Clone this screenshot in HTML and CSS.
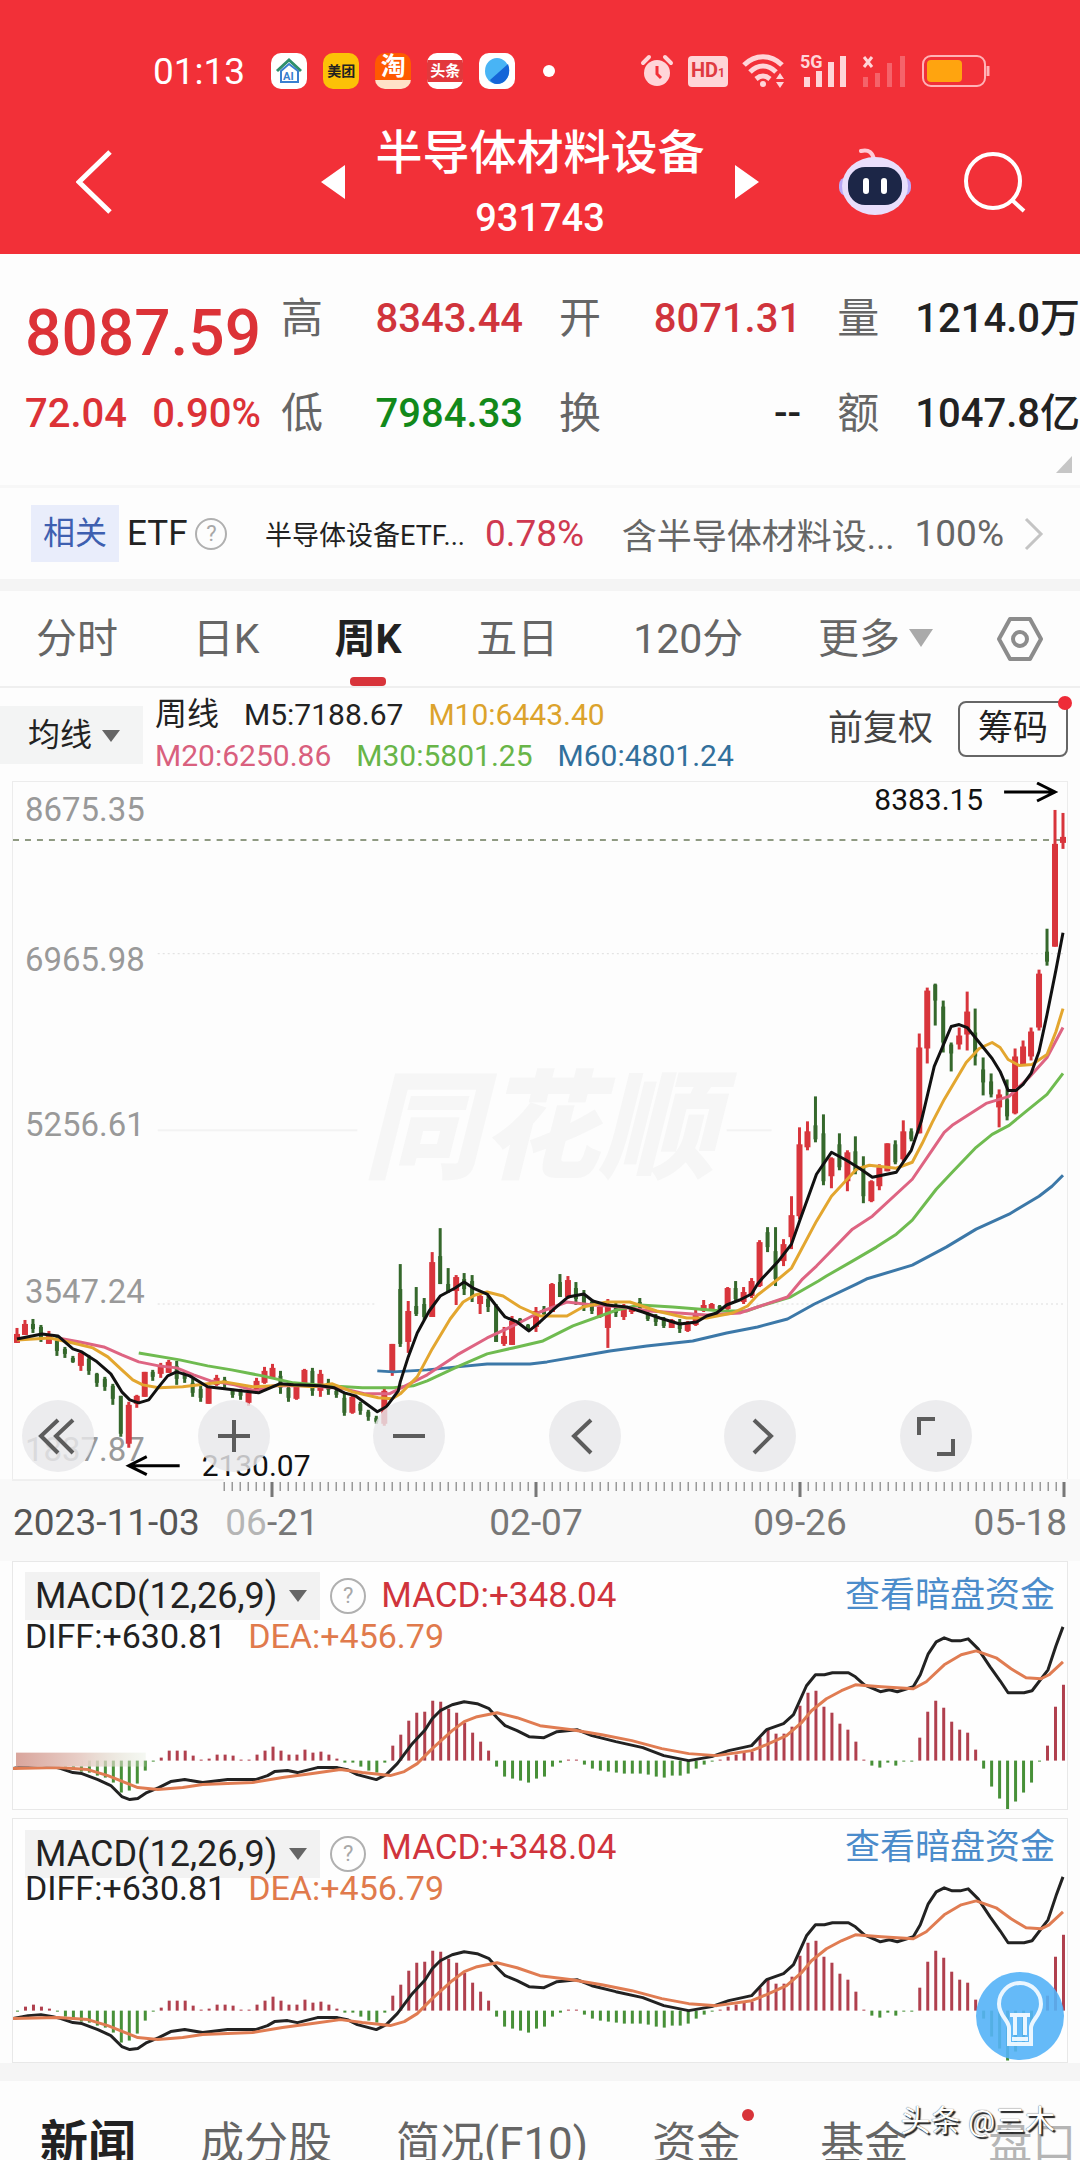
FILE: index.html
```html
<!DOCTYPE html>
<html lang="zh-CN">

<head>
  <meta charset="UTF-8">
  <meta name="viewport" content="width=device-width, initial-scale=1.0">
  <title>半导体材料设备 931743</title>
  <link rel="stylesheet" href="styles.css">
</head>

<body>
  <header class="top">
    <div class="status">
      <div class="status-left">
        <span class="clock">01:13</span>
        <span class="app app-home">
          <svg viewBox="0 0 36 36"><path d="M6 18 18 7l12 11" fill="none" stroke="#2f8f6b" stroke-width="3"/><path d="M10 18v11h17V18L18 11z" fill="none" stroke="#3a7fd0" stroke-width="2"/><text x="12" y="27" font-size="11" font-weight="700" fill="#3a7fd0">AI</text></svg>
        </span>
        <span class="app app-meituan">美团</span>
        <span class="app app-taobao">淘</span>
        <span class="app app-toutiao"><b>头条</b></span>
        <span class="app app-browser">
          <svg viewBox="0 0 36 36"><ellipse cx="18" cy="18" rx="12" ry="13" fill="#48b4f5"/><path d="M29 11c4 10-2 20-11 20-3 0-6-2-7-4z" fill="#1565d8"/></svg>
        </span>
        <span class="more-dot"></span>
      </div>
      <div class="status-right">
        <svg width="34" height="34" viewBox="0 0 34 34"><circle cx="17" cy="19" r="13" fill="#ffd5d8"/><path d="M3 9 9 3M31 9l-6-6" stroke="#ffd5d8" stroke-width="4" stroke-linecap="round"/><path d="M17 12v8l4 4" fill="none" stroke="#f23038" stroke-width="3"/></svg>
        <span class="hd">HD<small>1</small></span>
        <svg width="44" height="36" viewBox="0 0 44 36"><g fill="none" stroke="#ffd5d8" stroke-width="5"><path d="M2 12c11-11 27-11 38 0M8 19c8-8 18-8 26 0M14 26c5-4 9-4 14 0"/></g><circle cx="21" cy="31" r="3" fill="#ffd5d8"/><path d="M34 26l4-6 4 6zM34 29l4 6 4-6z" fill="#ffd5d8"/></svg>
        <svg width="48" height="36" viewBox="0 0 48 36"><text x="0" y="15" font-size="18" font-weight="700" fill="#ffd5d8">5G</text><g fill="#ffd5d8"><path d="M4 24h6v10H4zM16 18h6v16h-6zM28 9h6v25h-6zM40 3h6v31h-6z"/></g></svg>
        <svg width="46" height="36" viewBox="0 0 46 36"><path d="M2 4l8 10M10 4 2 14" stroke="#ffd5d8" stroke-width="3"/><g fill="#f5636a"><path d="M1 24h5v10H1zM13 20h5v14h-5zM25 10h5v24h-5zM38 3h5v31h-5z"/></g></svg>
        <svg width="68" height="32" viewBox="0 0 68 32"><rect x="1" y="1" width="62" height="30" rx="8" fill="none" stroke="#ffb3b7" stroke-width="2"/><rect x="5" y="5" width="35" height="22" rx="4" fill="#ffa40f"/><path d="M66 11v10" stroke="#ffb3b7" stroke-width="3"/></svg>
      </div>
    </div>

    <div class="titlebar">
      <div class="side">
        <button class="icon-btn" aria-label="返回">
          <svg width="36" height="64" viewBox="0 0 36 64"><path d="M34 2 3 32l31 30" fill="none" stroke="#fff" stroke-width="5"/></svg>
        </button>
      </div>
      <div class="switcher">
        <button class="icon-btn" aria-label="上一只"><svg width="24" height="34" viewBox="0 0 24 34"><path d="M24 0v34L0 17z" fill="#fff"/></svg></button>
        <div class="names">
          <h1>半导体材料设备</h1>
          <p>931743</p>
        </div>
        <button class="icon-btn" aria-label="下一只"><svg width="24" height="34" viewBox="0 0 24 34"><path d="M0 0v34l24-17z" fill="#fff"/></svg></button>
      </div>
      <div class="side side-right">
        <button class="icon-btn" aria-label="助手">
          <svg width="72" height="68" viewBox="0 0 72 68"><path d="M22 3c8-2 12 2 13 9" fill="none" stroke="#ffc9d6" stroke-width="4" stroke-linecap="round"/><rect x="0" y="29" width="72" height="19" rx="8" fill="#b9a8f5"/><ellipse cx="36" cy="38" rx="33" ry="29" fill="#e9defb"/><rect x="9" y="19" width="54" height="38" rx="17" fill="#1c2647"/><path d="M27 33v10M45 33v10" stroke="#fff" stroke-width="6" stroke-linecap="round"/></svg>
        </button>
        <button class="icon-btn" aria-label="搜索">
          <svg width="62" height="62" viewBox="0 0 62 62"><circle cx="29" cy="30" r="27" fill="none" stroke="#fff" stroke-width="4"/><path d="M48 49l12 11" stroke="#fff" stroke-width="4"/></svg>
        </button>
      </div>
    </div>
  </header>

  <section class="quote">
    <div class="price">
      <strong>8087.59</strong>
      <div class="change"><span>72.04</span><span>0.90%</span></div>
    </div>
    <dl class="stats">
      <dt>高</dt><dd class="red">8343.44</dd>
      <dt>开</dt><dd class="red">8071.31</dd>
      <dt>量</dt><dd>1214.0万</dd>
      <dt>低</dt><dd class="green">7984.33</dd>
      <dt>换</dt><dd>--</dd>
      <dt>额</dt><dd>1047.8亿</dd>
    </dl>
    <span class="corner"></span>
  </section>

  <section class="related">
    <div class="related-group tight">
      <span class="tag">相关</span>
      <span class="etf">ETF</span>
      <button class="help" aria-label="说明">?</button>
    </div>
    <a href="#" class="related-group fund"><span class="fund-name">半导体设备ETF...</span><span class="fund-rate">0.78%</span></a>
    <a href="#" class="related-group holding">
      <span>含半导体材料设...</span><span class="ratio">100%</span>
      <svg width="20" height="34" viewBox="0 0 20 34"><path d="M2 2l15 15L2 32" fill="none" stroke="#c4c4c4" stroke-width="3"/></svg>
    </a>
  </section>

  <nav class="periods">
    <button>分时</button>
    <button>日K</button>
    <button class="active">周K</button>
    <button>五日</button>
    <button>120分</button>
    <button class="more">更多<i class="caret"></i></button>
    <button aria-label="设置">
      <svg width="48" height="46" viewBox="0 0 48 46"><path d="M14 3h20l11 20-11 20H14L3 23z" fill="none" stroke="#8c8c8c" stroke-width="4" stroke-linejoin="round"/><circle cx="24" cy="23" r="7" fill="none" stroke="#8c8c8c" stroke-width="4"/></svg>
    </button>
  </nav>

  <section class="averages">
    <button class="ma-select">均线<i class="caret"></i></button>
    <div class="ma-values">
      <div><span class="cycle">周线</span><span>M5:7188.67</span><span class="m10">M10:6443.40</span></div>
      <div><span class="m20">M20:6250.86</span><span class="m30">M30:5801.25</span><span class="m60">M60:4801.24</span></div>
    </div>
    <div class="ma-actions">
      <button class="adjust">前复权</button>
      <button class="chips">筹码</button>
    </div>
  </section>

  <section class="kline">
    <svg id="kline" viewBox="0 0 1056 698"></svg>
    <div class="tools">
      <button aria-label="最早"><svg viewBox="0 0 72 72"><path d="M36 20 19 36l17 17M51 20 34 36l17 17"/></svg></button>
      <button aria-label="放大"><svg viewBox="0 0 72 72"><path d="M20 36h32M36 20v32"/></svg></button>
      <button aria-label="缩小"><svg viewBox="0 0 72 72"><path d="M20 36h32"/></svg></button>
      <button aria-label="左移"><svg viewBox="0 0 72 72"><path d="M42 20 25 36l17 17"/></svg></button>
      <button aria-label="右移"><svg viewBox="0 0 72 72"><path d="M30 20l17 16-17 17"/></svg></button>
      <button aria-label="全屏"><svg viewBox="0 0 72 72"><path d="M35 19H19v16M53 39v15H37"/></svg></button>
    </div>
  </section>
  <div class="axis">
    <svg id="axis" viewBox="0 0 1056 82"></svg>
  </div>

  <section class="macd">
    <svg class="macd-chart" viewBox="0 -199 1056 248"></svg>
    <div class="macd-head">
      <div class="macd-row">
        <button class="macd-select">MACD(12,26,9)<i class="caret"></i></button>
        <button class="help" aria-label="说明">?</button>
        <span class="red">MACD:+348.04</span>
        <a href="#">查看暗盘资金</a>
      </div>
      <div class="macd-row second"><span>DIFF:+630.81</span><span class="dea">DEA:+456.79</span></div>
    </div>
  </section>

  <section class="macd compact">
    <svg class="macd-chart" viewBox="0 -192 1056 243"></svg>
    <div class="macd-head">
      <div class="macd-row">
        <button class="macd-select">MACD(12,26,9)<i class="caret"></i></button>
        <button class="help" aria-label="说明">?</button>
        <span class="red">MACD:+348.04</span>
        <a href="#">查看暗盘资金</a>
      </div>
      <div class="macd-row second"><span>DIFF:+630.81</span><span class="dea">DEA:+456.79</span></div>
    </div>
    <button class="bulb" aria-label="提示">
      <svg viewBox="0 0 88 88"><path d="M33 56c0-8-10-12-10-24a21 21 0 0 1 42 0c0 12-10 16-10 24v16H33z" fill="none" stroke="#eaf6ff" stroke-width="4"/><path d="M34 43h20M39 43v20M49 43v20M36 67h16" stroke="#eaf6ff" stroke-width="4"/></svg>
    </button>
  </section>

  <nav class="news">
    <button class="active">新闻</button>
    <button>成分股</button>
    <button>简况(F10)</button>
    <button class="dot">资金</button>
    <button>基金</button>
    <button class="faded">盘口</button>
    <span class="credit">头条 @三木</span>
  </nav>

  <script src="script.js"></script>
</body>

</html>
```

FILE: styles.css
```css
* {
  box-sizing: border-box;
}

body {
  margin: 0;
  overflow-x: hidden;
  font-family: Roboto, "Noto Sans CJK SC", sans-serif;
  color: #222;
  background-color: #fdfdfd;
}

button {
  padding: 0;
  border: none;
  background: none;
  font: inherit;
  color: inherit;
  white-space: nowrap;
  cursor: pointer;
}

a {
  color: inherit;
  text-decoration: none;
}

svg {
  display: block;
}

h1,
p,
dl,
dd {
  margin: 0;
}

.red {
  color: #d0343c;
}

.green {
  color: #12891a;
}

.caret {
  display: inline-block;
  border: 9px solid transparent;
  border-top: 12px solid #666;
  border-bottom: none;
}

/* header */
.top {
  padding-top: 48px;
  background-color: #f23038;
  color: white;
}

.status {
  height: 46px;
  padding: 0 90px 0 153px;
  display: flex;
  justify-content: space-between;
  align-items: center;
}

.status-left,
.status-right {
  display: flex;
  align-items: center;
  gap: 16px;
}

.status-right {
  gap: 14px;
}

.clock {
  margin-right: 10px;
  font-size: 37px;
}

.app {
  width: 36px;
  height: 36px;
  border-radius: 10px;
  overflow: hidden;
  background-color: white;
  text-align: center;
  line-height: 36px;
}

.app-meituan {
  background-color: #fcc107;
  color: #222;
  font-size: 14px;
  font-weight: bold;
}

.app-taobao {
  background-image: linear-gradient(#ff5a00 75%, #ffe2c8 75%);
  font-size: 25px;
  line-height: 28px;
  font-weight: bold;
}

.app-toutiao b {
  display: block;
  margin-top: 7px;
  background-color: #e2383c;
  font-size: 15px;
  line-height: 22px;
}

.more-dot {
  width: 12px;
  height: 12px;
  margin-left: 12px;
  border-radius: 50%;
  background-color: white;
}

.hd {
  padding: 0 3px;
  border-radius: 4px;
  background-color: #ffd5d8;
  color: #e03a41;
  font-size: 20px;
  line-height: 28px;
  font-weight: bold;
}

.hd small {
  font-size: 12px;
}

.titlebar {
  padding: 31px 0 16px;
  display: grid;
  grid-template-columns: 1fr 438px 1fr;
  align-items: center;
}

.side {
  display: flex;
  padding-left: 76px;
}

.side-right {
  justify-content: flex-end;
  align-items: center;
  gap: 53px;
  padding: 0 54px 0 0;
}

.switcher {
  display: flex;
  justify-content: space-between;
  align-items: center;
}

.names {
  text-align: center;
}

.names h1 {
  font-size: 47px;
  line-height: 56px;
  font-weight: 500;
}

.names p {
  margin-top: 17px;
  font-size: 38px;
  line-height: 40px;
  font-weight: 500;
}

/* quote */
.quote {
  position: relative;
  display: flex;
  gap: 20px;
  padding: 41px 0 47px 25px;
  font-size: 40px;
  line-height: 48px;
  font-weight: 500;
}

.price {
  padding-top: 7px;
  color: #dc3237;
}

.price strong {
  display: block;
  font-size: 64px;
  line-height: 64px;
  font-weight: 500;
}

.change {
  margin-top: 24px;
  display: flex;
  justify-content: space-between;
}

.stats {
  flex: 1;
  display: grid;
  grid-template-columns: 42px 1fr 42px 1fr 42px auto;
  gap: 46px 36px;
}

.stats dt {
  color: #666;
  font-size: 42px;
  font-weight: 400;
}

.stats dd {
  text-align: right;
}

.corner {
  position: absolute;
  right: 8px;
  bottom: 12px;
  border-left: 16px solid transparent;
  border-bottom: 17px solid #c6c6c6;
}

/* related ETF */
.related {
  height: 94px;
  padding: 0 36px 0 31px;
  display: flex;
  justify-content: space-between;
  align-items: center;
  border-top: 3px solid #f7f7f7;
}

.related-group {
  display: flex;
  align-items: center;
  gap: 20px;
}

.tight {
  gap: 8px;
}

.tag {
  padding: 0 12px;
  background-color: #e9edfb;
  color: #3e5fb0;
  font-size: 32px;
  line-height: 57px;
}

.etf {
  font-size: 35px;
}

.help {
  width: 32px;
  height: 32px;
  border: 2px solid #b0b0b0;
  border-radius: 50%;
  color: #a8a8a8;
  font-size: 22px;
  line-height: 26px;
}

.fund-name {
  font-size: 27px;
}

.fund-rate {
  color: #cf3950;
  font-size: 37px;
}

.holding {
  color: #666;
  font-size: 35px;
}

.ratio {
  font-size: 37px;
}

/* period tabs */
.periods {
  height: 109px;
  padding: 0 36px;
  display: flex;
  justify-content: space-between;
  align-items: center;
  border-top: 12px solid #f4f4f4;
  border-bottom: 2px solid #efefef;
  color: #666;
  font-size: 41px;
}

.periods button {
  position: relative;
  line-height: 94px;
}

.periods .active {
  color: #222;
  font-weight: bold;
}

.periods .active::after {
  content: "";
  position: absolute;
  left: 16px;
  bottom: 0;
  width: 36px;
  height: 9px;
  border-radius: 4px;
  background-color: #d8343a;
}

.periods .more {
  margin-right: -12px;
}

.more .caret {
  margin-left: 9px;
  vertical-align: 6px;
  border-width: 18px 12px 0;
  border-top-color: #aaa;
}

/* moving averages */
.averages {
  height: 93px;
  padding-right: 12px;
  display: flex;
  align-items: center;
}

.ma-select {
  padding: 0 23px 0 28px;
  background-color: #f3f4f4;
  font-size: 32px;
  line-height: 58px;
}

.ma-select .caret {
  margin-left: 10px;
  vertical-align: 4px;
}

.ma-values {
  flex: 1;
  padding-left: 12px;
  font-size: 30px;
}

.ma-values div {
  display: flex;
  gap: 25px;
  line-height: 41px;
}

.cycle {
  font-size: 32px;
}

.m10 {
  color: #dca32c;
}

.m20 {
  color: #d9607e;
}

.m30 {
  color: #68b548;
}

.m60 {
  color: #32709c;
}

.ma-actions {
  display: flex;
  align-items: center;
  gap: 25px;
  margin-bottom: 12px;
  font-size: 35px;
  line-height: 52px;
}

.adjust {
  color: #444;
}

.chips {
  position: relative;
  padding: 0 18px;
  border: 2px solid #666;
  border-radius: 8px;
}

.chips::after {
  content: "";
  position: absolute;
  top: -7px;
  right: -6px;
  width: 14px;
  height: 14px;
  border-radius: 50%;
  background-color: #ee2b38;
}

/* k line */
.kline {
  position: relative;
  margin: 0 12px;
  border: 1px solid #ececec;
  border-width: 1px 1px 0;
}

.axis {
  padding: 0 12px;
  background-color: #f9f9f9;
}

.mark {
  fill: #f6f6f6;
  font-size: 118px;
  font-weight: 900;
  font-style: italic;
}

.scale {
  fill: #999;
  font-size: 33px;
}

.peak {
  fill: #111;
  font-size: 30px;
}

.date {
  fill: #777;
  font-size: 37px;
}

.date.start {
  fill: #555;
}

.tools {
  position: absolute;
  left: 9px;
  right: 95px;
  bottom: 7px;
  display: flex;
  justify-content: space-between;
}

.tools button {
  width: 72px;
  height: 72px;
  border-radius: 50%;
  background-color: rgba(232, 232, 234, 0.82);
}

.tools path {
  fill: none;
  stroke: #5c5c5c;
  stroke-width: 4;
}

/* macd */
.macd {
  position: relative;
  display: grid;
  margin: 0 12px;
  border: 1px solid #e8e8e8;
  background-color: #fefefe;
}

.macd-chart,
.macd-head {
  grid-area: 1 / 1;
}

.macd-chart {
  width: 100%;
}

.macd-head {
  position: relative;
  padding: 10px 12px 0;
}

.macd-row {
  display: flex;
  align-items: flex-start;
  font-size: 35px;
  line-height: 48px;
}

.macd-select {
  padding: 0 13px 0 10px;
  background-color: #f2f2f2;
  font-size: 36px;
  line-height: 48px;
}

.macd-select .caret {
  margin-left: 12px;
  vertical-align: 6px;
}

.macd .help {
  width: 36px;
  height: 36px;
  margin: 6px 15px 0 10px;
  line-height: 30px;
}

.macd-row a {
  margin-left: auto;
  color: #4b8ccb;
}

.macd .second {
  gap: 22px;
  font-size: 34px;
  line-height: 32px;
}

.dea {
  color: #e07a4c;
}

.compact {
  margin-top: 8px;
}

.compact .macd-head {
  padding-top: 5px;
}

.compact .macd-select,
.compact .help {
  position: relative;
  top: 6px;
}

.compact .second {
  position: relative;
}

.bulb {
  position: absolute;
  right: 3px;
  bottom: 2px;
  width: 88px;
  height: 88px;
  border-radius: 50%;
  background-color: rgba(84, 178, 247, 0.9);
}

/* bottom tabs */
.news {
  position: relative;
  height: 98px;
  padding: 21px 0 0 40px;
  display: flex;
  gap: 64px;
  overflow: hidden;
  border-top: 18px solid #f5f5f5;
  color: #666;
  font-size: 44px;
  line-height: 84px;
}

.news button {
  position: relative;
  height: 84px;
}

.news .active {
  color: #222;
  font-size: 48px;
  font-weight: bold;
}

.news .dot {
  margin-right: 16px;
}

.dot::after {
  content: "";
  position: absolute;
  top: 7px;
  right: -14px;
  width: 12px;
  height: 12px;
  border-radius: 50%;
  background-color: #d8343a;
}

.news .faded {
  margin-left: 16px;
  color: #b5b5b5;
}

.credit {
  position: absolute;
  right: 25px;
  bottom: 20px;
  color: white;
  font-size: 30px;
  line-height: 40px;
  text-shadow: 2px 2px 1px #222, 0 0 1px #222;
}
```

FILE: script.js
```js
// one candle per week: colour, high, low, body top, body bottom
const candles = `
R547,562,553,562 R539,554,543,554 G538,552,543,548 G544,561,546,558 R550,563,555,563 G555,575,560,570
G566,577,568,573 G575,582,577,581 R570,590,572,585 G574,594,578,590 G592,606,593,602 G596,610,598,606
G603,624,605,618 G615,656,615,653 R621,667,624,663 R614,627,615,623 R591,616,591,616 G589,600,591,596
R582,597,584,593 R579,592,581,592 G580,604,585,598 G591,602,593,598 G598,616,602,612 G605,621,608,617
R605,623,606,623 R594,605,597,604 G596,607,599,603 G608,617,610,614 G608,619,610,615 R609,625,612,622
R597,613,600,610 R586,603,590,602 R583,598,587,597 G590,613,595,607 G605,621,607,617 R605,619,606,618
R588,605,589,605 G587,615,590,610 R589,616,593,610 G598,614,602,609 G608,617,610,614 G613,635,617,632
R615,633,616,632 G621,634,623,630 G629,640,631,636 G635,643,637,641 R606,645,610,643 R563,595,563,591
G483,566,508,563 R520,572,530,561 G506,535,525,533 G517,539,523,536 R471,536,481,536 G447,503,475,503
G487,512,503,510 R494,524,496,510 G492,514,498,508 G494,521,500,516 R513,533,515,523 G515,531,518,526
G523,561,525,561 R546,565,555,563 R535,564,540,564 G537,541,538,541 G543,549,544,548 R526,551,530,546
G525,535,528,533 R502,531,503,531 G493,516,501,516 R495,518,499,516 G501,524,507,518 G509,530,514,527
G518,533,521,530 R525,537,526,536 R518,567,525,547 G521,536,524,532 R523,539,526,536 R525,533,526,531
G517,531,521,528 G531,540,532,538 G533,545,535,541 G536,547,538,545 R538,547,539,547 G538,552,541,548
R540,551,541,550 R527,545,532,544 R519,531,524,530 R522,530,523,529 G524,530,525,529 R506,529,507,528
G500,520,507,518 R506,523,511,521 R497,517,500,515 R459,506,461,505 G446,471,451,466 G446,505,470,498
R458,485,463,480 R415,468,434,456 R346,438,363,435 R340,369,350,366 G315,361,344,358 G333,404,352,400
R376,407,377,395 G352,389,363,386 R369,410,371,400 G355,393,370,390 G375,422,385,415 R399,421,400,420
R383,409,386,405 R362,390,362,390 G359,383,363,381 R339,380,350,378 G347,360,350,358 R252,352,266,352
R206,282,209,267 G202,244,203,219 G219,271,225,261 G261,290,263,272 R246,268,254,263 R210,269,230,253
G227,284,251,275 G276,314,288,301 G292,316,300,313 R308,346,313,326 G298,339,318,335 R267,333,275,332
R259,283,265,283 R246,279,250,275 R188,249,192,246 G147,184,170,180 R28,165,62,165 R31,67,55,61`.trim().split(/\s+/);

const averages = [
  ["#3c78a8", "365,590 381,591 415,589 445,586 475,583 518,583 535,581 575,574 598,570 635,565 681,560 715,552 746,546 776,538 803,523 845,503 855,498 901,484 935,466 965,448 998,433 1028,415 1041,405 1052,394"],
  ["#6fbb50", "126,572 167,579 195,585 219,589 250,595 281,602 315,605 350,607 381,607 401,605 415,600 445,586 475,573 501,567 531,560 561,545 605,529 628,524 661,526 711,530 735,530 746,526 779,516 807,500 815,495 841,480 865,466 885,453 901,439 925,408 941,391 965,366 981,353 998,344 1015,330 1036,313 1052,292"],
  ["#de6482", "45,557 67,561 91,566 109,574 126,581 146,585 164,587 181,594 198,600 222,604 243,610 260,605 298,605 332,608 353,613 377,613 401,601 415,594 445,574 475,557 505,543 528,531 555,521 581,524 611,526 638,530 695,534 728,532 746,526 776,516 791,498 805,485 841,448 861,435 901,398 918,373 933,351 941,344 975,322 998,315 1018,296 1036,276 1052,246"],
  ["#e3a62f", "4,559 37,557 60,562 80,567 95,576 109,589 120,599 130,604 146,607 170,606 195,603 212,601 240,606 262,605 275,604 300,606 320,603 340,611 366,617 380,618 388,613 405,596 420,568 438,538 451,521 463,514 475,511 491,515 508,526 528,535 555,535 571,526 595,521 618,521 645,530 675,537 695,537 721,532 736,525 746,514 768,497 780,487 805,440 820,415 833,401 845,388 858,384 885,387 901,381 911,362 921,341 933,318 955,281 968,267 981,261 989,266 997,278 1008,284 1021,283 1036,273 1045,250 1052,227"],
  ["#111", "4,558 29,553 45,555 60,568 69,571 83,580 98,593 109,611 117,619 126,622 136,619 146,606 155,595 164,591 177,595 195,606 212,608 246,612 267,603 281,604 308,605 322,607 332,612 343,615 365,631 374,626 386,610 388,601 396,576 405,552 417,530 428,515 443,507 452,501 461,507 475,513 485,526 493,536 505,541 517,550 528,541 541,529 556,516 572,513 581,520 595,524 615,526 631,531 648,537 668,543 685,541 695,535 705,532 715,524 728,519 740,513 746,503 751,497 766,481 780,463 788,440 805,393 820,371 835,379 848,387 861,396 885,391 900,369 910,340 923,285 940,245 948,243 956,246 981,277 989,290 997,309 1005,309 1012,303 1020,292 1028,270 1036,233 1045,188 1052,151"]
];

const bars = [0, 4, 6, 4, 2, -1, -6, -9, -11, -12, -15, -17, -22, -32, -30, -23, -10, -1, 3, 10, 10, 10, 5, 1, 2, 6, 6, 5, 1, 1, 6, 10, 14, 10, 6, 6, 11, 8, 9, 6, 2, -2, -2, -6, -10, -12, -2, 15, 26, 40, 48, 49, 60, 59, 52, 48, 38, 28, 19, 10, -6, -16, -18, -20, -22, -18, -16, -6, -2, 1, 1, -4, -8, -10, -11, -12, -13, -13, -13, -14, -16, -17, -15, -15, -13, -8, -4, -1, 1, 4, 6, 8, 9, 23, 31, 27, 27, 34, 55, 68, 70, 54, 48, 37, 31, 19, 1, -5, -7, -2, -5, -1, -1, 23, 49, 60, 53, 39, 31, 28, 11, -8, -26, -38, -50, -41, -32, -22, -1, 15, 54, 76];
const diff = "0,8 15,5 28,4 40,6 48,8 60,12 69,13 85,19 98,25 109,36 117,39 125,38 134,32 146,27 158,21 172,19 190,22 215,19 243,19 255,15 262,11 275,10 285,12 305,7 325,7 335,9 345,14 364,19 374,14 385,3 400,-17 413,-31 420,-42 428,-50 440,-56 452,-59 465,-57 477,-52 485,-43 493,-35 505,-30 517,-24 532,-23 545,-29 565,-31 580,-25 604,-19 631,-13 652,-5 677,0 700,-4 717,-10 740,-15 755,-31 772,-37 782,-46 795,-75 804,-86 813,-86 821,-88 837,-88 844,-84 853,-76 869,-69 878,-71 886,-69 902,-74 909,-86 917,-107 925,-119 933,-123 941,-120 949,-120 957,-122 967,-112 979,-94 989,-80 997,-68 1013,-68 1021,-70 1037,-91 1045,-115 1052,-134";
const dea = "0,8 45,7 75,9 95,15 110,21 125,27 145,29 170,27 190,24 240,22 270,17 300,13 328,9 350,12 378,15 392,11 405,3 420,-12 440,-30 452,-39 465,-44 485,-48 505,-43 528,-35 560,-31 590,-26 620,-20 650,-12 677,-7 705,-5 740,-10 755,-16 775,-25 790,-38 800,-50 815,-62 830,-70 844,-76 870,-74 902,-72 915,-79 933,-96 950,-106 965,-110 985,-103 1000,-92 1015,-83 1030,-82 1038,-86 1052,-99";

const xOf = i => 4 + i * 8;

function line(points, color) {
  return `<polyline points="${points}" fill="none" stroke="${color}" stroke-width="3" stroke-linejoin="round"/>`;
}

function drawKline() {
  let out = `
    <path d="M145 172H1052M145 523H365M740 523H1052" stroke="#ddd" stroke-dasharray="2 3"/>
    <path d="M145 349H345M715 349H760" stroke="#f3f3f3" stroke-width="2"/>
    <text class="mark" x="528" y="388" text-anchor="middle">同花顺</text>
    <path d="M0 58H1052" stroke="#8f9a82" stroke-width="2" stroke-dasharray="6 6"/>`;
  [["8675.35", 39], ["6965.98", 189], ["5256.61", 355], ["3547.24", 522], ["1837.87", 680]].forEach(([label, y]) => {
    out += `<text class="scale" x="12" y="${y}">${label}</text>`;
  });
  candles.forEach((c, i) => {
    const up = c[0] === "R";
    const [high, low, top, bottom] = c.slice(1).split(",").map(Number);
    const color = up ? "#d8353c" : "#35682c";
    const w = up ? 6 : 4;
    out += `<rect x="${xOf(i) - 1.5}" y="${high}" width="3" height="${low - high}" fill="${color}"/>`;
    out += `<rect x="${xOf(i) - w / 2}" y="${top}" width="${w}" height="${bottom - top}" fill="${color}"/>`;
  });
  averages.forEach(([color, points]) => {
    out += line(points, color);
  });
  out += `
    <text class="peak" x="863" y="28">8383.15</text>
    <path d="M993 10h50M1026 1l18 9-18 9" fill="none" stroke="#000" stroke-width="3"/>
    <text class="peak" x="189" y="695">2130.07</text>
    <path d="M167 685h-50M134 676l-18 9 18 9" fill="none" stroke="#000" stroke-width="3"/>`;
  document.getElementById("kline").innerHTML = out;
}

function drawAxis() {
  let out = `<path d="M0 1H212" stroke="#e6e6e6"/>`;
  for (let x = 212; x <= 1052; x += 8) {
    const major = (x - 260) % 264 === 0;
    out += `<rect x="${x - (major ? 1.5 : 0.5)}" y="3" width="${major ? 3 : 1.5}" height="${major ? 15 : 9}" fill="${major ? "#777" : "#999"}"/>`;
  }
  out += `
    <text class="date start" x="1" y="56">2023-11-03</text>
    <text class="date" x="260" y="56" text-anchor="middle"><tspan fill="#b5b5b5">06</tspan>-21</text>
    <text class="date" x="524" y="56" text-anchor="middle">02-07</text>
    <text class="date" x="788" y="56" text-anchor="middle">09-26</text>
    <text class="date" x="1055" y="56" text-anchor="end">05-18</text>`;
  document.getElementById("axis").innerHTML = out;
}

function drawMacd(svg) {
  let out = "";
  bars.forEach((v, i) => {
    const h = Math.max(Math.abs(v), 1);
    out += `<rect x="${xOf(i) - 1}" y="${v > 0 ? -h : 0}" width="3" height="${h}" fill="${v > 0 ? "#b0404e" : "#479038"}"/>`;
  });
  out += line(diff, "#222") + line(dea, "#e07c52");
  svg.innerHTML = out;
}

drawKline();
drawAxis();
document.querySelectorAll(".macd-chart").forEach(drawMacd);

document.querySelector(".macd-chart").innerHTML += `
  <defs>
    <linearGradient id="fade">
      <stop offset="0" stop-color="#d9a59c"/>
      <stop offset="0.5" stop-color="#e8cfc8"/>
      <stop offset="1" stop-color="#dfe8d6" stop-opacity="0.3"/>
    </linearGradient>
  </defs>
  <rect x="3" y="-8" width="130" height="14" fill="url(#fade)"/>`;
```
